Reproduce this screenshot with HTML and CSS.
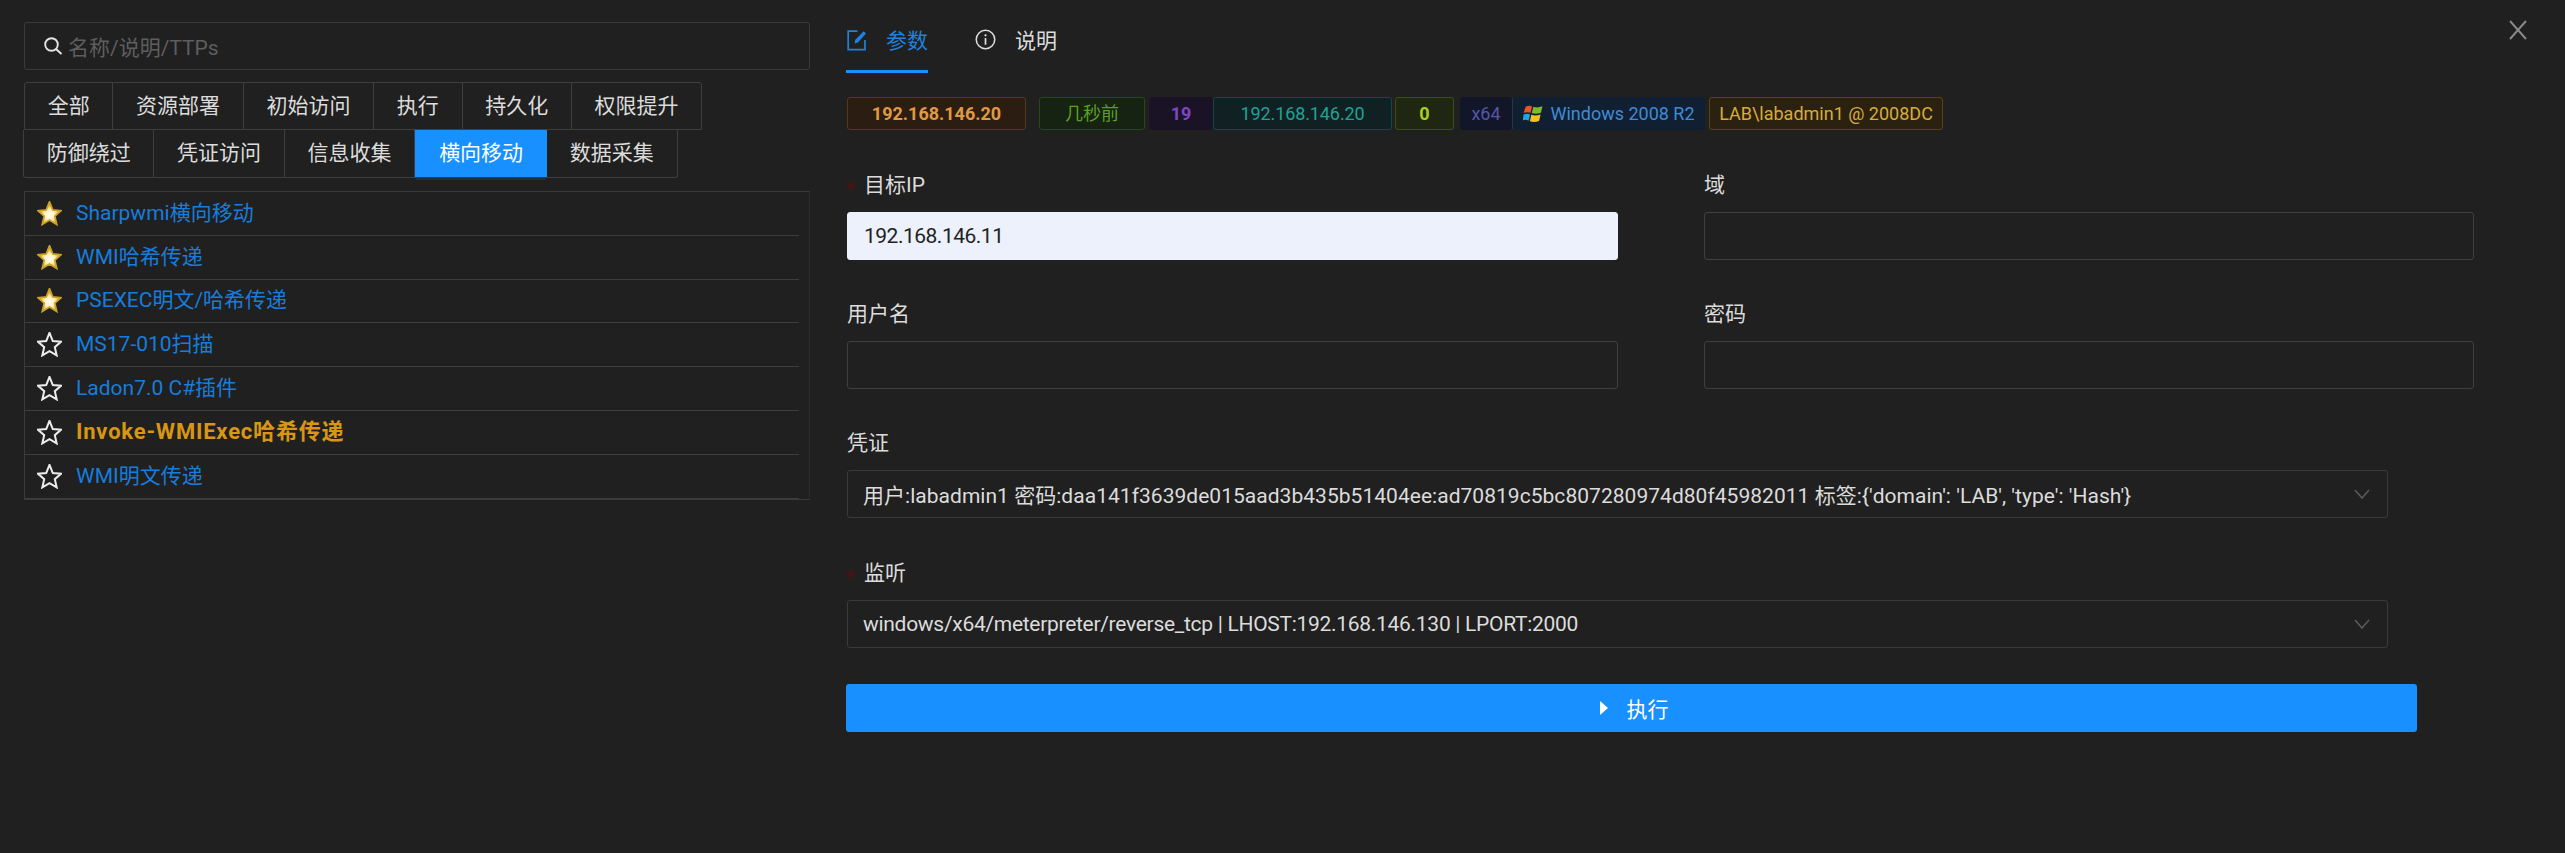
FILE: index.html
```html
<!DOCTYPE html>
<html lang="zh-CN">
<head>
<meta charset="utf-8">
<title>模块</title>
<link rel="stylesheet" href="styles.css">
</head>
<body>
<svg class="defs" width="0" height="0" aria-hidden="true">
  <defs>
    <radialGradient id="gold" cx="50%" cy="58%" r="55%">
      <stop offset="0" stop-color="#fffdf0"/>
      <stop offset=".4" stop-color="#fff0c4"/>
      <stop offset=".72" stop-color="#f0b93a"/>
      <stop offset="1" stop-color="#b88f1a"/>
    </radialGradient>
    <path id="star" d="M12.5 .8 15.8 9 24 9.7 17.8 15.2 19.7 23.4 12.5 19.1 5.3 23.4 7.2 15.2 1 9.7 9.2 9Z"/>
  </defs>
</svg>
<div class="page">
  <aside class="left">
    <div class="search">
      <svg class="search-icon" viewBox="0 0 20 20" width="20" height="20"><circle cx="8.5" cy="8.5" r="6.3" fill="none" stroke="#e4e4e4" stroke-width="1.9"/><path d="M13 13l5.5 5" stroke="#e4e4e4" stroke-width="2" fill="none"/></svg>
      <span class="placeholder">名称/说明/TTPs</span>
    </div>
    <div class="tabrow first">
      <span class="cell">全部</span><span class="cell">资源部署</span><span class="cell">初始访问</span><span class="cell">执行</span><span class="cell">持久化</span><span class="cell">权限提升</span>
    </div>
    <div class="tabrow second">
      <span class="cell">防御绕过</span><span class="cell">凭证访问</span><span class="cell">信息收集</span><span class="cell active">横向移动</span><span class="cell">数据采集</span>
    </div>
    <ul class="list">
      <li class="row"><svg class="star" viewBox="0 0 25 25" width="25" height="25"><use href="#star" class="star-on"/></svg><span class="link">Sharpwmi横向移动</span></li>
      <li class="row"><svg class="star" viewBox="0 0 25 25" width="25" height="25"><use href="#star" class="star-on"/></svg><span class="link">WMI哈希传递</span></li>
      <li class="row"><svg class="star" viewBox="0 0 25 25" width="25" height="25"><use href="#star" class="star-on"/></svg><span class="link">PSEXEC明文/哈希传递</span></li>
      <li class="row"><svg class="star" viewBox="0 0 25 25" width="25" height="25"><use href="#star" class="star-off"/></svg><span class="link">MS17-010扫描</span></li>
      <li class="row"><svg class="star" viewBox="0 0 25 25" width="25" height="25"><use href="#star" class="star-off"/></svg><span class="link">Ladon7.0 C#插件</span></li>
      <li class="row"><svg class="star" viewBox="0 0 25 25" width="25" height="25"><use href="#star" class="star-off"/></svg><span class="link hot">Invoke-WMIExec哈希传递</span></li>
      <li class="row"><svg class="star" viewBox="0 0 25 25" width="25" height="25"><use href="#star" class="star-off"/></svg><span class="link">WMI明文传递</span></li>
    </ul>
  </aside>
  <main class="right">
    <nav class="tabs">
      <div class="tab on">
        <svg viewBox="0 0 20 22" width="20" height="22"><path d="M10.5 2.2H1.2V20.6H18V11" fill="none" stroke="currentColor" stroke-width="1.7"/><path d="M7.5 14.5 8.3 10.8 16.6 2.2 19 4.6 11 13.6z" fill="currentColor"/></svg>
        <span>参数</span>
      </div>
      <div class="tab">
        <svg viewBox="0 0 22 22" width="21" height="21"><circle cx="11" cy="11" r="9.7" fill="none" stroke="currentColor" stroke-width="1.6"/><path d="M11 9.5v7" stroke="currentColor" stroke-width="1.8"/><circle cx="11" cy="6.6" r="1.2" fill="currentColor"/></svg>
        <span>说明</span>
      </div>
    </nav>
    <div class="tags">
      <span class="tag orange">192.168.146.20</span>
      <span class="tag green">几秒前</span>
      <span class="tag purple">19</span>
      <span class="tag cyan">192.168.146.20</span>
      <span class="tag lime">0</span>
      <span class="tag geek">x64</span>
      <span class="tag blue"><svg viewBox="0 0 20 20" width="22" height="21"><path d="M1 9.5 3 3.5Q6 2 9.2 3.3L7.6 9.4Q4.5 8 1 9.5Z" fill="#e8552a"/><path d="M10.4 3.5Q14 5 19 3.2L17.6 9.2Q13 11 8.8 9.6Z" fill="#7fba2e"/><path d="M.4 16.5 1 11Q4.5 9.6 7.2 11L5.8 16.8Q3 15.4.4 16.5Z" fill="#23a6e6"/><path d="M8.4 11.2Q12.6 12.8 17.2 11L15.8 17.2Q11 19 7 17.4Z" fill="#f4c21f"/></svg><span class="os">Windows 2008 R2</span></span>
      <span class="tag gold">LAB\labadmin1 @ 2008DC</span>
    </div>
    <form class="form">
      <div class="grid">
        <div class="field">
          <div class="label req">目标IP</div>
          <div class="input filled">192.168.146.11</div>
        </div>
        <div class="field">
          <div class="label">域</div>
          <div class="input"></div>
        </div>
        <div class="field">
          <div class="label">用户名</div>
          <div class="input"></div>
        </div>
        <div class="field">
          <div class="label">密码</div>
          <div class="input"></div>
        </div>
      </div>
      <div class="field wide">
        <div class="label">凭证</div>
        <div class="select"><span>用户:labadmin1 密码:daa141f3639de015aad3b435b51404ee:ad70819c5bc807280974d80f45982011 标签:{'domain': 'LAB', 'type': 'Hash'}</span><svg viewBox="0 0 16 10" width="16" height="10"><path d="M1 1l7 8 7-8" fill="none" stroke="#5c5c5c" stroke-width="1.5"/></svg></div>
      </div>
      <div class="field wide">
        <div class="label req">监听</div>
        <div class="select narrow"><span>windows/x64/meterpreter/reverse_tcp | LHOST:192.168.146.130 | LPORT:2000</span><svg viewBox="0 0 16 10" width="16" height="10"><path d="M1 1l7 8 7-8" fill="none" stroke="#5c5c5c" stroke-width="1.5"/></svg></div>
      </div>
      <button class="run" type="button"><svg viewBox="0 0 10 16" width="10" height="16"><path d="M1 1l8 7-8 7z" fill="#fff"/></svg><span>执行</span></button>
    </form>
  </main>
  <svg class="close" viewBox="0 0 18 20" width="18" height="20"><path d="M1 1l16 18M17 1 1 19" stroke="#8a8a8a" stroke-width="1.9" fill="none"/></svg>
</div>
</body>
</html>
```

FILE: styles.css
```css
* { box-sizing: border-box; }
html, body { margin: 0; padding: 0; height: 100%; }
body {
  background: #202020;
  color: rgba(255,255,255,.85);
  font-family: Roboto, "Noto Sans CJK SC", sans-serif;
  font-size: 21px;
  overflow: hidden;
}
.defs { position: absolute; }
.page { display: flex; position: relative; height: 853px; padding: 22px 0 0 24px; gap: 37px; }
.left { width: 786px; flex: none; }
.search {
  height: 48px; display: flex; align-items: center; gap: 5px; padding-left: 18px;
  border: 1px solid #3a3a3a; border-radius: 3px;
}
.placeholder { color: #5e5e5e; }
.tabrow { display: flex; width: fit-content; height: 48px; border: 1px solid #3f3f3f; }
.tabrow.first { margin-top: 12px; border-radius: 3px 3px 0 0; }
.tabrow.second { margin-left: -1px; border-radius: 0 0 3px 3px; border-top: 0; }
.cell {
  display: flex; align-items: center; padding: 0 22.7px; border-right: 1px solid #3f3f3f; line-height: 1;
}
.cell:last-child { border-right: 0; }
.cell.active { padding: 0 24px; background: #1890ff; color: #fff; border-right: 0; box-shadow: 0 4px 0 -1px rgba(24,60,90,.6); }
.list { list-style: none; margin: 13px 0 0; padding: 0 10px 0 0; border: 1px solid #3a3a3a; border-right-color: #2b2b2b; position: relative; }
.row { display: flex; align-items: center; gap: 14px; height: 43.8px; padding-left: 12px; border-bottom: 1px solid #3d3d3d; }
.star { flex: none; }
.star-on { fill: url(#gold); stroke: #c9a227; stroke-width: 1.8; }
.star-off { fill: none; stroke: #ececec; stroke-width: 2; }
.link { color: #177ddc; line-height: 1; }
.link.hot { color: #d89614; font-weight: 700; font-size: 22px; letter-spacing: .8px; }
.right { flex: none; width: 1640px; }
.tabs { display: flex; gap: 47px; height: 51px; }
.tab { display: flex; align-items: flex-start; gap: 19px; height: 51px; padding-top: 7px; line-height: 24px; }
.tab svg { flex: none; }
.tab.on { color: #1d82df; border-bottom: 3px solid #1890ff; margin-left: -1px; padding-left: 1px; }
.tags { display: flex; align-items: stretch; height: 33px; margin: 24px 0 1px; font-size: 18px; }
.tag { display: flex; align-items: center; justify-content: center; border: 1px solid transparent; border-radius: 3px; line-height: 1; white-space: nowrap; }
.orange { width: 179px; color: #e09a42; font-weight: 700; background: #2b1d11; border-color: #593815; margin-right: 13px; }
.green { width: 106px; color: #5aa023; background: #162312; border-color: #274916; margin-right: 4px; }
.purple { width: 64px; color: #7d47c4; font-weight: 700; background: #1a1325; border-color: #1a1325; }
.cyan { width: 179px; color: #1fa295; background: #112123; border-color: #144848; margin-right: 3px; letter-spacing: -.1px; }
.lime { width: 59px; color: #a8cf1c; font-weight: 700; background: #1f2611; border-color: #3e4d14; margin-right: 6px; }
.geek { width: 52px; color: #5557a8; background: #131629; border-color: #131629; }
.blue { width: 193px; gap: 6px; background: #111f33; border-color: #111f33; border-left-color: #2a3443; margin-right: 4px; }
.os { color: #3f8bd6; }
.gold { width: 234px; color: #d8ab3a; background: #2b2111; border-color: #594214; }
.field { padding-top: 40px; }
.label { height: 29px; margin-bottom: 12px; line-height: 29px; position: relative; }
.label.req { padding-left: 17px; }
.label.req::before { content: ""; position: absolute; left: 0; top: 11px; width: 8px; height: 8px; border-radius: 50%; background: #3f1518; }
.grid { display: grid; grid-template-columns: 771px 770px; column-gap: 86px; }
.input { height: 48px; border: 1px solid #3f3f3f; border-radius: 3px; display: flex; align-items: center; padding: 0 16px; letter-spacing: -.5px; }
.input.filled { background: #ecf1fb; border-color: #ecf1fb; color: #222; }
.wide { width: 1541px; }
.wide + .wide { padding-top: 41px; }
.select { height: 48px; border: 1px solid #3a3a3a; border-radius: 3px; display: flex; align-items: center; justify-content: space-between; padding: 0 17px 0 15px; }
.select span { white-space: nowrap; letter-spacing: .03px; }
.select.narrow span { letter-spacing: -.29px; }
.run {
  display: flex; align-items: center; justify-content: center; gap: 18px;
  width: 1571px; height: 48px; margin: 36px 0 0 -1px; padding: 0 0 0 4px; border: 0; border-radius: 3px;
  background: #1890ff; color: #fff; font: inherit;
}
.close { position: absolute; left: 2509px; top: 20px; }
```
